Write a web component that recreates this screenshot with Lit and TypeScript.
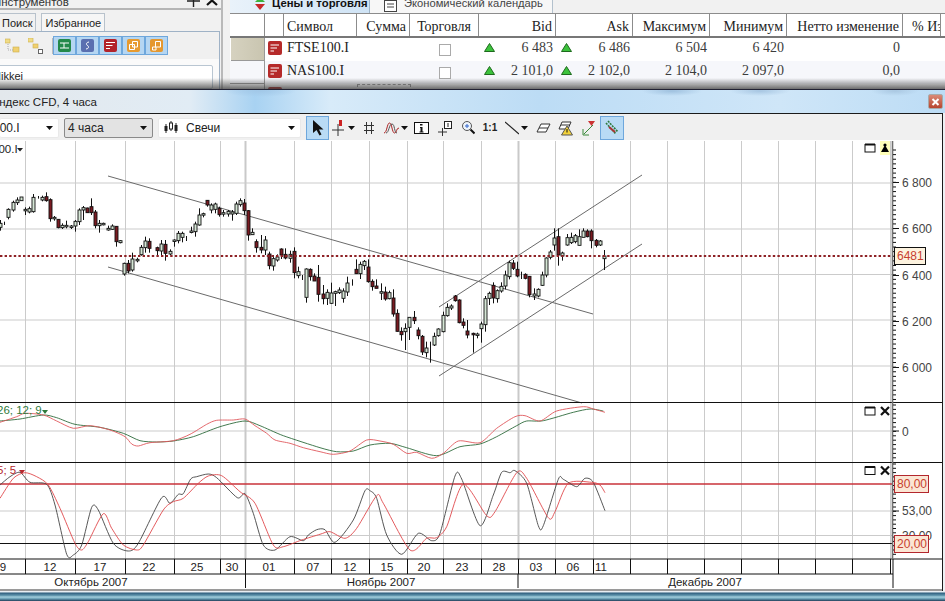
import { LitElement, html, css, svg } from "lit";
import { customElement } from "lit/decorators.js";

type C = [number, number, number, number, number, number];
// candle rows in 3x crop coordinates: x, wick top, wick bottom, body top, body bottom, kind (0 up, 1 down, 2 wick only)
const A: C[] = [[1,180,212,190,202,0],[13,185,195,0,0,2],[25,145,178,148,172,0],[38,122,155,127,150,0],[51,112,135,120,128,0],[64,111,122,111,122,0],[76,142,165,148,152,0],[88,140,160,146,156,0],[100,102,158,112,155,0],[113,108,116,0,0,2],[125,107,124,112,120,0],[139,97,125,110,122,1],[151,115,185,119,176,1],[163,168,182,172,175,0],[175,177,205,178,203,1],[187,190,207,196,203,0],[199,182,205,196,200,0],[212,195,207,198,201,0],[226,180,215,184,198,0],[238,145,195,150,185,0],[250,138,180,143,150,0],[262,143,158,144,158,1],[274,115,165,140,158,1],[286,150,205,156,197,1],[298,180,218,190,197,0],[310,188,196,190,194,0],[325,197,212,205,210,0],[337,193,210,198,208,0],[349,198,260,199,245,1],[361,240,250,242,248,0],[373,308,347,310,342,0],[385,300,340,310,333,1],[397,278,335,297,330,0],[412,293,307,298,302,0],[424,255,287,262,284,0],[436,230,278,243,263,0],[448,235,278,244,265,1],[472,260,290,263,272,1],[484,240,285,252,273,0],[496,240,302,253,280,1],[511,268,285,274,282,0],[523,238,260,240,244,0],[535,213,250,220,242,0],[547,215,247,220,232,0],[559,228,243,0,0,2],[572,200,220,213,216,0],[584,185,230,192,215,0],[598,145,197,165,195,0],[610,158,172,161,165,0],[622,120,140,121,135,1],[634,130,160,135,150,0],[646,128,160,132,148,0],[658,140,170,145,164,1],[670,150,170,158,162,0],[685,150,170,154,162,0],[697,150,182,156,162,0],[709,125,165,132,160,0],[721,115,140,122,134,0],[733,117,165,129,152,1],[745,150,242,152,225,1],[757,205,225,217,224,0],[769,238,278,245,263,1],[784,225,280,262,270,1],[796,228,285,240,270,0],[808,275,328,282,317,1],[820,285,332,296,318,0],[832,283,305,291,300,0],[844,265,297,267,285,1],[856,265,298,283,294,1],[871,272,308,283,295,0],[883,262,355,274,338,1],[895,320,355,335,347,0],[907,345,360,0,0,2],[919,325,428,327,412,0],[931,325,362,328,350,1],[943,340,362,348,363,1],[955,315,425,352,403,1]];
const B: C[] = [[10,195,253,222,236,1],[22,208,255,217,235,0],[34,188,252,219,250,0],[46,212,258,215,220,0],[58,202,222,210,218,0],[70,205,248,213,235,0],[82,170,228,189,216,0],[97,178,197,0,0,2],[109,118,162,148,161,1],[121,125,177,133,161,0],[133,120,150,124,137,0],[145,118,188,141,185,1],[157,178,212,184,200,1],[169,178,205,198,205,1],[184,190,240,215,217,0],[196,200,242,216,237,1],[208,212,238,218,236,0],[220,208,290,234,282,1],[232,268,335,280,334,1],[244,322,362,334,344,1],[256,310,390,325,335,0],[268,292,360,292,322,0],[283,273,312,292,302,1],[295,322,358,330,347,1],[307,345,405,349,396,1],[319,365,412,384,398,0],[331,365,428,0,0,2],[343,338,378,349,375,0],[355,325,350,327,347,0],[370,275,337,286,335,0],[382,250,290,262,287,0],[394,253,270,258,264,0],[406,225,245,228,242,1],[418,238,310,240,308,1],[430,295,325,306,316,1],[442,300,355,333,345,1],[458,338,398,340,342,1],[470,338,355,342,346,0],[482,305,368,312,326,0],[494,228,335,236,314,0],[506,215,255,220,235,0],[518,187,250,196,234,1],[530,208,248,212,236,0],[542,187,218,199,213,0],[556,152,208,165,198,0],[568,122,178,128,170,0],[580,120,150,129,145,1],[592,125,172,148,168,1],[604,155,177,0,0,2],[616,160,178,163,175,1],[628,168,232,169,224,1],[642,205,240,222,228,0],[655,205,232,208,228,0],[667,155,198,165,196,0],[679,112,172,114,165,0],[691,90,118,96,112,0],[703,25,92,54,75,0],[715,25,137,50,105,1],[727,95,122,99,108,0],[742,42,77,53,75,0],[754,38,72,52,68,0],[766,42,70,47,65,0],[778,28,76,50,76,0],[790,25,52,33,52,0],[802,28,52,33,50,1],[814,28,85,33,62,1],[829,57,82,61,76,1],[841,60,78,63,75,0],[853,90,150,108,116,0]];

type P = number[];
const pts = (l: P, r: P) => {
  const o: [number, number][] = [];
  for (let i = 0; i < l.length; i += 2) o.push([l[i] / 3, 395 + l[i + 1] / 3]);
  for (let i = 0; i < r.length; i += 2) o.push([320 + r[i] / 3, 395 + r[i + 1] / 3]);
  let d = `M${o[0][0].toFixed(1)} ${o[0][1].toFixed(1)}`;
  for (let i = 0; i < o.length - 1; i++) {
    const a = o[Math.max(0, i - 1)], b = o[i], c = o[i + 1], e = o[Math.min(o.length - 1, i + 2)];
    const k = 0.13;
    d += `C${(b[0] + (c[0] - a[0]) * k).toFixed(1)} ${(b[1] + (c[1] - a[1]) * k).toFixed(1)} ${(c[0] - (e[0] - b[0]) * k).toFixed(1)} ${(c[1] - (e[1] - b[1]) * k).toFixed(1)} ${c[0].toFixed(1)} ${c[1].toFixed(1)}`;
  }
  return d;
};
const macdA = pts([0,78,60,72,130,60,170,68,225,88,300,97,370,115,420,137,470,141,520,138,580,125,660,95,735,78,780,92,850,122,960,158],[50,170,100,168,150,150,210,145,260,158,350,182,420,155,480,147,530,125,590,92,620,78,670,77,760,52,810,42,850,48]);
const macdB = pts([0,82,50,65,75,55,130,60,170,78,220,100,270,92,330,105,375,125,395,147,415,153,450,143,520,137,570,118,620,88,650,76,700,75,735,72,765,92,800,115,825,135,870,145,910,158,960,170],[40,178,90,168,140,135,180,138,220,148,260,175,290,172,335,190,370,175,415,138,480,143,530,100,585,65,615,62,660,78,710,48,790,35,820,42,855,52]);
const stoA = pts([0,270,30,245,60,232,90,262,140,268,165,330,200,478,220,480,245,450,275,337,295,345,340,445,385,468,415,445,485,308,510,325,535,298,550,296,572,252,590,245,625,237,650,248,712,308,735,296,760,355,790,450,825,465,870,425,910,437,925,420,950,404],[15,404,45,442,100,375,135,287,150,287,170,310,200,420,245,478,295,415,335,437,360,415,405,243,425,252,480,392,520,300,545,232,570,233,585,227,620,265,655,392,670,392,715,253,730,253,770,275,795,250,820,262,855,347]);
const stoB = pts([0,310,40,250,75,233,110,245,145,270,180,340,225,445,245,465,265,440,310,356,335,400,370,450,410,465,430,450,490,345,520,320,550,310,595,265,625,243,665,242,720,290,765,325,820,450,850,455,905,435,960,418],[30,410,75,430,110,400,170,302,190,325,270,465,320,430,350,428,380,395,430,268,500,362,525,350,590,233,620,250,685,368,705,350,745,265,815,262,840,270,855,293]);

const GRID = [25,75,125,174,220,245,294,331,369,407,443,481,518,555,593,630,667,704,741,778,815,852,890];
const DATES: [string, number][] = [["9",3],["12",50],["17",100],["22",149],["25",197],["30",232],["01",269],["07",313],["12",350],["15",387],["20",424],["23",462],["28",499],["03",536],["06",573],["11",601]];
const HGRID = [183,229,274.5,320,366,431,511,535.5];
const PRICES: [string, number][] = [["6 800",182],["6 600",228],["6 400",275],["6 200",321],["6 000",367]];

function ticks() {
  const out: any[] = [];
  for (let y = 150; y < 402; y += 4.62) out.push(svg`<line class="ax" x1="893" x2="896" y1=${y} y2=${y}></line>`);
  for (const [, y] of PRICES) out.push(svg`<line class="ax" x1="893" x2="899" y1=${y + 0.5} y2=${y + 0.5}></line>`);
  for (let y = 405; y < 461; y += 4.4) out.push(svg`<line class="ax" x1="893" x2="896" y1=${y} y2=${y}></line>`);
  out.push(svg`<line class="ax" x1="893" x2="899" y1="431" y2="431"></line>`);
  for (let y = 464; y < 558; y += 4.3) out.push(svg`<line class="ax" x1="893" x2="896" y1=${y} y2=${y}></line>`);
  out.push(svg`<line class="ax" x1="893" x2="899" y1="511" y2="511"></line>`);
  return out;
}

function candle(c: C, ox: number, oy: number) {
  const x = Math.round(ox + c[0] / 3) + 0.5;
  const wick = svg`<line class="wick" x1=${x} x2=${x} y1=${oy + c[1] / 3} y2=${oy + c[2] / 3}></line>`;
  if (c[5] === 2) return wick;
  const t = oy + c[3] / 3, h = Math.max(1.5, (c[4] - c[3]) / 3);
  return svg`${wick}<rect class=${c[5] === 1 ? "dn" : "up"} x=${x - 1.5} y=${t} width="3" height=${h}></rect>`;
}

function paneBtns(y: number, close: boolean) {
  return svg`<rect class="boxb" x="865" y=${y - 3.5} width="10" height="7.5"></rect>
    <line class="boxt" x1="865" x2="875" y1=${y - 3.5} y2=${y - 3.5}></line>
    ${close ? svg`<path class="xx" d="M881 ${y - 4}L889 ${y + 4}M889 ${y - 4}L881 ${y + 4}"></path>` : svg`<rect class="hl" x="880" y=${y - 7} width="10" height="14"></rect><path d="M885 ${y - 3}L889 ${y + 4}H881Z"></path><circle cx="885" cy=${y - 3} r="1.6"></circle>`}`;
}

const caret = html`<svg class="dd" width="7" height="4" viewBox="0 0 7 4"><path d="M0 0H7L3.5 4Z"></path></svg>`;
const ic = (w: number, body: any) => html`<svg width=${w} height="16" viewBox="0 0 ${w} 16">${body}</svg>`;

const TOOLS = [
  { cls: "t23 on", icon: ic(14, svg`<path d="M2 0V13L5.5 10L8.5 15.5L10.5 14.5L8 9.5H12.5Z" fill="#111"></path>`) },
  { cls: "t28", icon: html`${ic(14, svg`<path d="M6 4V16M0 10H12" stroke="#333" fill="none"></path><rect x="7" y="0" width="3" height="6" fill="#c22"></rect>`)}${caret}` },
  { cls: "t24", icon: ic(12, svg`<path d="M3.5 2V14M8.5 2V14M1 5.5H11M1 10.5H11" stroke="#333" fill="none"></path>`) },
  { cls: "t30", icon: html`${ic(15, svg`<path d="M0 13C3 13 3 3 5.5 3S8 13 10.5 13S12 8 15 8" stroke="#a22" fill="none"></path><path d="M2 13C5 13 5 4 8 4S10 13 13 13" stroke="#555" fill="none"></path>`)}${caret}` },
  { cls: "t20", icon: ic(15, svg`<rect x="0.5" y="2.5" width="14" height="11" fill="#fff" stroke="#111"></rect><path d="M6 5.5H8.5V4H6ZM6 7H8.5V11.5H9.5V12.5H5.5V11.5H6.5V8H6Z" fill="#111"></path>`) },
  { cls: "t24", icon: ic(15, svg`<path d="M4.5 8V16M0 12H9" stroke="#333" fill="none"></path><rect x="6.5" y="1.5" width="7" height="7" fill="#fff" stroke="#222"></rect><path d="M10 3V7" stroke="#222"></path>`) },
  { cls: "t22", icon: ic(14, svg`<circle cx="6" cy="6" r="4.5" fill="#eef4fb" stroke="#555"></circle><path d="M9.5 9.5L13.5 13.5" stroke="#111" stroke-width="2"></path><path d="M4 6H8M6 4V8" stroke="#36c"></path>`) },
  { cls: "t22 one", icon: html`<span>1:1</span>` },
  { cls: "t31", icon: html`${ic(14, svg`<path d="M0 2L14 14" stroke="#222" stroke-width="1.2"></path>`)}${caret}` },
  { cls: "t22", icon: ic(15, svg`<path d="M5 4H14L10 12H1Z" fill="#fff" stroke="#333"></path><path d="M3 8H12" stroke="#333"></path>`) },
  { cls: "t23", icon: ic(15, svg`<path d="M4 2H13L10 9H1Z" fill="#fff" stroke="#333"></path><path d="M3 5H12" stroke="#333"></path><path d="M9 6L14.5 15H3.5Z" fill="#f3d23a" stroke="#555"></path><path d="M9 9V12.5" stroke="#111"></path>`) },
  { cls: "t23", icon: ic(14, svg`<path d="M2 14L11 5" stroke="#3a8a3a"></path><path d="M1 9V15H7" stroke="#3a8a3a" fill="none"></path><path d="M6 1H13L9.5 6Z" fill="#c33"></path>`) },
  { cls: "t24 on", icon: ic(16, svg`<path d="M2 3L12 14M4 1L14 12" stroke="#2e7a3e" stroke-width="1.6" stroke-dasharray="2 1" fill="none"></path><path d="M5 7L11 12" stroke="#a33" stroke-width="2"></path>`) },
];

const ROWS = [
  { sym: "FTSE100.I", bid: "6 483", ask: "6 486", hi: "6 504", lo: "6 420", net: "0" },
  { sym: "NAS100.I", bid: "2 101,0", ask: "2 102,0", hi: "2 104,0", lo: "2 097,0", net: "0,0" },
];
const HEAD: [string, string][] = [["", ""], ["", ""], ["Символ", "l"], ["Сумма", "r"], ["Торговля", "c"], ["Bid", "r"], ["Ask", "r"], ["Максимум", "r"], ["Минимум", "r"], ["Нетто изменение", "r"], ["% Изменение", "pct"]];

const doc = html`<svg class="ric" width="14" height="14" viewBox="0 0 14 14"><rect width="14" height="14" rx="2" fill="#b52a2a"></rect><path d="M2.5 4H11M2.5 7H9M2.5 10H6" stroke="#fff" stroke-width="1.2"></path></svg>`;
const tri = html`<svg class="tri" width="11" height="9" viewBox="0 0 11 9"><path d="M5.5 .5L10.5 8.5H.5Z" fill="#3cc23c" stroke="#1d6a1d"></path></svg>`;

@customElement("app-root")
export class AppRoot extends LitElement {
  static styles = css`
    :host { display: block; width: 945px; height: 601px; overflow: hidden; background: #eef1f4; font-family: "Liberation Sans", Arial, sans-serif; color: #222; }
    .top { height: 89px; display: flex; position: relative; overflow: hidden; background: #f1f1f1; }
    .shade { position: absolute; left: 0; right: 0; bottom: 0; height: 11px; background: linear-gradient(to bottom, rgba(70,70,70,0), rgba(60,60,60,.75)); }
    .left { width: 221px; border-right: 2px solid #b9b9b9; flex: none; }
    .ptitle { margin-top: -5px; padding: 0 3px 0 0; display: flex; align-items: center; border-bottom: 2px solid #b5b5b5; font-size: 11.5px; line-height: 12px; height: 13px; color: #333; }
    .ptitle span { margin-left: -7px; flex: 1; }
    .ptitle .pin { margin-right: 6px; }
    .ptabs { display: flex; height: 18px; margin-top: 3px; gap: 5px; font-size: 11px; }
    .ptabs div { padding: 3px 3px 0; border: 1px solid #b8c2cc; border-bottom: none; background: #f6f6f6; }
    .ptabs div:first-child { border-left: none; padding-left: 2px; background: #f1f1f1; }
    .pbody { margin-right: 1px; border-top: 1px solid #9fb2c6; border-right: 1px solid #9fb2c6; height: 57px; background: #fafafa; }
    .ptool { height: 27px; display: flex; align-items: center; background: #f0f0f0; padding-left: 5px; }
    .ptool .tree { margin-right: 8px; }
    .sep { width: 1px; height: 16px; background: #bbb; margin: 0 0 0 1px; }
    .pbtn { width: 23px; height: 19px; display: flex; align-items: center; justify-content: center; background: #b5d6f2; border: 1px solid #6ea7dc; box-sizing: border-box; }
    .search { margin: 6px 6px 0 -2px; height: 22px; background: #fff; border: 1px solid #b9c6d2; border-radius: 2px; font-size: 11px; line-height: 21px; overflow: hidden; }
    .search span { margin-left: -6px; display: inline-block; }
    .right { flex: 1; margin-left: 7px; min-width: 0; background: #fff; }
    .rtabs { height: 13px; display: flex; line-height: 12px; overflow: hidden; background: #f1f1f1; white-space: nowrap; }
    .rtabs div { display: flex; align-items: flex-start; height: 13px; }
    .tab1 { width: 140px; box-sizing: border-box; padding-left: 22px; gap: 4px; font-weight: bold; font-size: 11.3px; background: linear-gradient(to right, #e9f2fa, #cfe3f5); border-right: 1px solid #9db4c8; color: #111; }
    .tab1 span, .tab2 span { margin-top: -3px; }
    .tab2 { width: 183px; box-sizing: border-box; padding-left: 14px; gap: 7px; font-size: 11.2px; background: #f7f7f7; border-right: 1px solid #b3c1cd; color: #444; }
    .row { display: grid; grid-template-columns: 35px 19px 73px 53px 69px 77px 77px 77px 77px 116px 38px; font-family: "Liberation Serif", "Times New Roman", serif; font-size: 14px; }
    .head { border-top: 1px solid #8c8c8c; border-bottom: 2px solid #777; height: 22px; color: #222; background: #fff; }
    .head div { border-right: 1px solid #8c8c8c; line-height: 25px; padding: 0 3px; overflow: hidden; white-space: nowrap; box-sizing: border-box; }
    .l { text-align: left; } .r { text-align: right; } .c { text-align: center; }
    .head .pct { text-align: left; padding-left: 9px; }
    .data { height: 23px; color: #3c3c3c; background: #fff; }
    .data.alt { background: #f6f7fb; }
    .data > div { padding: 0 3px 4px; white-space: nowrap; box-sizing: border-box; display: flex; align-items: center; justify-content: flex-end; position: relative; }
    .data .first { border-right: 1px solid #999; border-bottom: 1px solid #999; padding: 0; }
    .data .beige { background: linear-gradient(to right, #d6d2c0, #c9c5b0); margin: 0 0 0 1px; }
    .data .ic { justify-content: center; padding: 0 0 4px; }
    .data .sym { justify-content: flex-start; color: #222; }
    .data .chk { justify-content: center; }
    .ck { width: 10px; height: 10px; border: 1px solid #aaa; background: #fff; margin: 4px 0 0 0; }
    .data .focus { border: 1px dashed #999; border-bottom: none; margin: 0 -1px 0 0; }
    .tri { position: absolute; left: 5px; top: 5px; }
    .win { height: 512px; display: flex; flex-direction: column; border-top: 1px solid #223; box-sizing: content-box; }
    .title { height: 23px; flex: none; display: flex; align-items: center; justify-content: space-between; padding-right: 2px; font-size: 11.5px;
      background: radial-gradient(ellipse 36px 6px at 260px 1px, #a2c8e8, transparent), radial-gradient(ellipse 30px 5px at 672px 1px, #9fc1df, transparent), radial-gradient(ellipse 30px 5px at 760px 1px, #a7c6e2, transparent), radial-gradient(ellipse 24px 5px at 895px 1px, #aac8e2, transparent), linear-gradient(to right, #e3e8ec 0, #e1ecf5 190px, #a8d2f2 255px, #d8ebf9 330px, #bcdcf5 540px, #cfe6f8 780px, #bcdcf5 945px); }
    .title span { margin-left: -9px; color: #222; }
    .close { width: 15px; height: 15px; background: linear-gradient(#d98a78, #b8452f); border: 1px solid #a9a9a9; border-radius: 2px; display: flex; align-items: center; justify-content: center; box-sizing: border-box; }
    .panel { flex: 1; margin-right: 2px; border: solid #1b1b1b; border-width: 1px 1px 0 0; display: flex; flex-direction: column; min-height: 0; }
    .bar { height: 26px; flex: none; background: #f0f0f0; display: flex; align-items: center; font-size: 12px; padding-top: 1px; box-sizing: border-box; }
    .sel { height: 20px; margin-right: 5px; display: flex; align-items: center; box-sizing: border-box; background: #fff; border-radius: 2px; padding: 0 5px 0 3px; position: relative; flex: none; border: 1px solid #e9e9e9; }
    .sel .dd { margin-left: auto; }
    .s1 { width: 59px; border-left: none; padding-left: 0; overflow: hidden; }
    .s1 span { margin-left: -7px; }
    .s2 { width: 89px; background: #e3e3e3; border: 1px solid #8a8a8a; }
    .s3 { width: 143px; }
    .s3 svg:first-child { margin: 0 8px 0 2px; }
    .dd { fill: #111; flex: none; margin-left: 2px; }
    .tools { display: flex; align-items: center; }
    .tool { height: 24px; display: flex; align-items: center; justify-content: center; box-sizing: border-box; flex: none; border: 1px solid transparent; }
    .tool.on { background: #b9dbf5; border-color: #6ea7dc; }
    .t20 { width: 20px; margin-right: 2px; } .t22 { width: 22px; } .t23 { width: 23px; } .t24 { width: 24px; } .t28 { width: 28px; } .t30 { width: 30px; } .t31 { width: 31px; }
    .one span { font-weight: bold; font-size: 10px; color: #222; }
    .canvas { flex: 1; min-height: 0; background: #fff; border-bottom: 2px solid #9a9a9a; }
    .canvas svg { display: block; }
    .strip { height: 11px; flex: none; background: linear-gradient(to bottom, #e8eef2 0, #e8eef2 9%, #2f5f7e 18%, #5d93ab 40%, #a4d0de 55%, #6aa0b6 70%, #2a4c66 88%, #1f3a50 100%); }
    .g { stroke: #cbcbcb; stroke-width: 1; }
    .gt { stroke: #c9c9c9; stroke-width: 2; }
    .k { stroke: #111; stroke-width: 1; }
    .tr { stroke: #6a6a6a; stroke-width: 1; }
    .wick { stroke: #111; stroke-width: 1; }
    .up { fill: #d5e6d5; stroke: #111; stroke-width: .9; }
    .dn { fill: #7a1b22; stroke: #111; stroke-width: .9; }
    .dot { stroke: #8e2226; stroke-width: 2; stroke-dasharray: 2.4 2.2; }
    .ln { fill: none; stroke-width: .9; }
    .ax { stroke: #111; stroke-width: 1; }
    .axl { stroke: #707070; stroke-width: 1.6; }
    .boxb { fill: #fff; stroke: #111; stroke-width: 1; }
    .boxt { stroke: #111; stroke-width: 2; }
    .xx { stroke: #111; stroke-width: 2.2; fill: none; }
    .hl { fill: #ffffb8; }
    text { font-family: "Liberation Sans", Arial, sans-serif; font-size: 11.5px; fill: #222; }
    .px { fill: #444; font-size: 12px; }
    .mid { text-anchor: middle; }
    .tag1 { fill: #fdf3df; stroke: #111; }
    .tag2 { fill: #fbe6d4; stroke: #b3272d; }
    .rt { fill: #c8402f; font-size: 12px; }
  `;

  chart() {
    return html`<svg width="942" height="448" viewBox="0 140 942 448">
      ${GRID.map((x) => svg`<line class=${x === 245 || x === 518 ? "gt" : "g"} x1=${x + 0.5} x2=${x + 0.5} y1="141" y2="559"></line>`)}
      ${HGRID.map((y) => svg`<line class="g" x1="0" x2="892" y1=${y} y2=${y}></line>`)}
      <line class="tr" x1="108" y1="176" x2="593" y2="314"></line>
      <line class="tr" x1="108" y1="267" x2="582" y2="403"></line>
      <line class="tr" x1="439" y1="307" x2="642" y2="175"></line>
      <line class="tr" x1="439" y1="376" x2="642" y2="244"></line>
      ${A.map((c) => candle(c, 0, 160))}
      ${B.map((c) => candle(c, 320, 220))}
      <line class="dot" x1="0" x2="893" y1="256" y2="256"></line>

      <path class="ln" stroke="#2f6b3c" d=${macdA}></path>
      <path class="ln" stroke="#e0585c" d=${macdB}></path>
      <line stroke="#c8323a" stroke-width="1.6" x1="0" x2="893" y1="484" y2="484"></line>
      <line class="k" x1="0" x2="893" y1="543.5" y2="543.5"></line>
      <path class="ln" stroke="#444" d=${stoA}></path>
      <path class="ln" stroke="#e0484c" d=${stoB}></path>

      <line class="k" x1="0" x2="942" y1="402.5" y2="402.5"></line>
      <line class="k" x1="0" x2="942" y1="462.5" y2="462.5"></line>
      <line class="k" x1="0" x2="942" y1="559" y2="559"></line>
      <line class="k" x1="0" x2="893" y1="574" y2="574"></line>

      <line class="axl" x1="892.5" x2="892.5" y1="141" y2="559"></line>
      <line class="k" x1="893" x2="893" y1="559" y2="589"></line>
      ${ticks()}
      ${GRID.map((x) => svg`<line class="k" x1=${x + 0.5} x2=${x + 0.5} y1="559" y2="574"></line>`)}
      <line class="k" x1="245.5" x2="245.5" y1="574" y2="589"></line>
      <line class="k" x1="518" x2="518" y1="574" y2="589"></line>

      ${DATES.map(([t, x]) => svg`<text class="mid" x=${x} y="571">${t}</text>`)}
      <text class="mid" x="91" y="586">Октябрь 2007</text>
      <text class="mid" x="381" y="586">Ноябрь 2007</text>
      <text class="mid" x="705" y="586">Декабрь 2007</text>

      ${PRICES.map(([t, y]) => svg`<text class="px" x="902" y=${y + 5}>${t}</text>`)}
      <text class="px" x="902" y="436">0</text>
      <text class="px" x="902" y="515">53,00</text>
      <text class="px" x="902" y="540">30,00</text>

      <rect class="tag1" x="894.5" y="247.5" width="31" height="17"></rect>
      <text class="rt" x="897" y="260">6481</text>
      <rect class="tag2" x="894.5" y="475.5" width="34" height="17"></rect>
      <text class="rt" x="897" y="488">80,00</text>
      <rect class="tag2" x="894.5" y="535.5" width="34" height="17"></rect>
      <text class="rt" x="897" y="548">20,00</text>

      ${paneBtns(148, false)}
      ${paneBtns(411, true)}
      ${paneBtns(470.5, true)}

      <text x="-8" y="153">100.I</text>
      <path d="M17 148H23L20 151.5Z" fill="#222"></path>
      <text x="-3" y="414" style="fill:#2f7a3c">26; 12; 9</text>
      <path d="M42 410H48L45 414Z" fill="#2f7a3c"></path>
      <text x="-3" y="474" style="fill:#b3272d">5; 5</text>
      <path d="M19 470H25L22 474Z" fill="#b3272d"></path>
    </svg>`;
  }

  render() {
    return html`
      <div class="top">
        <div class="left">
          <div class="ptitle"><span>Инструментов</span>
            <svg class="pin" width="13" height="10" viewBox="0 0 13 10"><path d="M6.5 -2V10M0 4H13" stroke="#222" stroke-width="1.4"></path></svg>
            <svg width="12" height="10" viewBox="0 0 12 10"><path d="M1 -1L11 8M11 -1L1 8" stroke="#111" stroke-width="2.2"></path></svg>
          </div>
          <div class="ptabs"><div>Поиск</div><div>Избранное</div></div>
          <div class="pbody">
            <div class="ptool">
              <svg class="tree" width="15" height="16" viewBox="0 0 15 16"><rect x="0" y="1" width="5" height="4" fill="#f0dc86" stroke="#cdb04c" stroke-width=".6"></rect><rect x="8" y="9" width="6" height="5" fill="#f0d070" stroke="#cdb04c" stroke-width=".6"></rect><path d="M3 6V12H8" stroke="#aaa" stroke-dasharray="1 1" fill="none"></path></svg>
              <svg class="tree" width="15" height="16" viewBox="0 0 15 16"><rect x="0" y="0" width="5" height="4" fill="#f0dc86" stroke="#cdb04c" stroke-width=".6"></rect><rect x="5" y="6" width="5" height="4" fill="#f0d070" stroke="#cdb04c" stroke-width=".6"></rect><rect x="10.5" y="11.5" width="4" height="4" fill="#fff" stroke="#666"></rect></svg>
              <div class="sep"></div>
              <div class="pbtn"><svg width="13" height="13" viewBox="0 0 13 13"><rect width="13" height="13" rx="2" fill="#23894a"></rect><path d="M2 4H11M2 9H11M6 4V9" stroke="#fff" fill="none"></path></svg></div>
              <div class="pbtn"><svg width="13" height="13" viewBox="0 0 13 13"><rect width="13" height="13" rx="2" fill="#5a6fb0"></rect><path d="M8 3C5 3 5 6 6.5 6.5S8 10 5 10" stroke="#fff" fill="none"></path></svg></div>
              <div class="pbtn"><svg width="13" height="13" viewBox="0 0 13 13"><rect width="13" height="13" rx="2" fill="#b3232a"></rect><path d="M2 3.5H11M2 6.5H8.5M2 9.5H6" stroke="#fff"></path></svg></div>
              <div class="pbtn"><svg width="13" height="13" viewBox="0 0 13 13"><rect width="13" height="13" rx="2" fill="#e79a2f"></rect><path d="M5.5 2.5H10.5V8H5.5ZM2.5 5.5H7.5V10.5H2.5Z" fill="none" stroke="#fff"></path></svg></div>
              <div class="pbtn"><svg width="13" height="13" viewBox="0 0 13 13"><rect width="13" height="13" rx="2" fill="#e5982f"></rect><path d="M5.5 2.5H10.5V8H5.5ZM2.5 8H6V11H2.5Z" fill="none" stroke="#fff"></path></svg></div>
            </div>
            <div class="search"><span>Nikkei</span></div>
          </div>
        </div>
        <div class="right">
          <div class="rtabs">
            <div class="tab1"><svg width="16" height="14" viewBox="0 0 16 14"><path d="M8 -3L13 2H3Z" fill="#3cb43c"></path><path d="M3 4H13L8 10Z" fill="#c8282a"></path></svg><span>Цены и торговля</span></div>
            <div class="tab2"><svg width="13" height="14" viewBox="0 0 13 14"><rect x=".5" y="0.5" width="12" height="11" fill="#fff" stroke="#444"></rect><path d="M3 4H10M3 7H10" stroke="#444"></path></svg><span>Экономический календарь</span></div>
          </div>
          <div class="row head">${HEAD.map(([t, a]) => html`<div class=${a}>${t}</div>`)}</div>
          ${ROWS.map((r, i) => html`<div class="row data ${i ? "alt" : ""}">
            <div class="first ${i ? "" : "beige"}"></div>
            <div class="ic">${doc}</div>
            <div class="sym">${r.sym}</div>
            <div></div>
            <div class="chk"><span class="ck"></span></div>
            <div>${tri}${r.bid}</div>
            <div>${tri}${r.ask}</div>
            <div>${r.hi}</div>
            <div>${r.lo}</div>
            <div>${r.net}</div>
            <div></div>
          </div>`)}
          <div class="row data">
            <div class="first"></div>
            <div class="ic">${doc}</div>
            <div></div>
            <div class="focus"></div>
          </div>
        </div>
        <div class="shade"></div>
      </div>
      <div class="win">
        <div class="title"><span>Индекс CFD, 4 часа</span>
          <div class="close"><svg width="9" height="8" viewBox="0 0 9 8"><path d="M1.5 1L7.5 7M7.5 1L1.5 7" stroke="#fff" stroke-width="2"></path></svg></div>
        </div>
        <div class="panel">
          <div class="bar">
            <div class="sel s1"><span>100.I</span>${caret}</div>
            <div class="sel s2">4 часа${caret}</div>
            <div class="sel s3"><svg width="14" height="14" viewBox="0 0 14 14"><path d="M2 3V12M7 0V10M12 2V12" stroke="#222"></path><rect x="0.5" y="5" width="3" height="5" fill="#222"></rect><rect x="5.5" y="2" width="3" height="6" fill="#fff" stroke="#222"></rect><rect x="10.5" y="4" width="3" height="6" fill="#222"></rect></svg>Свечи${caret}</div>
            <div class="tools">${TOOLS.map((t) => html`<div class="tool ${t.cls}">${t.icon}</div>`)}</div>
          </div>
          <div class="canvas">${this.chart()}</div>
        </div>
        <div class="strip"></div>
      </div>`;
  }
}
